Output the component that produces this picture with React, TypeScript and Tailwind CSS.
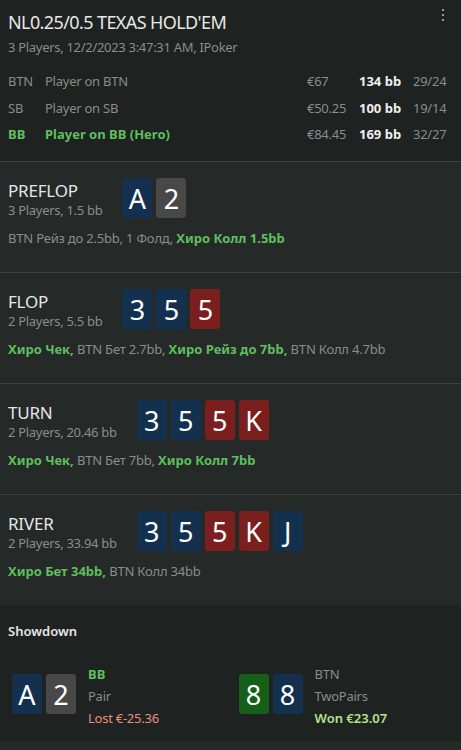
import React from "react";

type CardColor = "blue" | "gray" | "red" | "green";

const cardBg: Record<CardColor, string> = {
  blue: "bg-[#13314f]",
  gray: "bg-[#484848]",
  red: "bg-[#7b1e1e]",
  green: "bg-[#155f18]",
};

function Card({ v, c }: { v: string; c: CardColor }) {
  return (
    <div
      className={`${cardBg[c]} w-[30px] h-[40px] rounded-[3px] flex items-center justify-center text-[27px] leading-none text-white`}
    >
      {v}
    </div>
  );
}

type Seg = { t: string; hero?: boolean };

function Phase({
  name,
  sub,
  cards,
  actions,
}: {
  name: string;
  sub: string;
  cards: [string, CardColor][];
  actions: Seg[];
}) {
  return (
    <div className="border-t border-[#3b3f3e] bg-[#252928] h-[111px] px-2 pt-[18px]">
      <div className="flex items-start">
        <div className="flex flex-col">
          <div className="text-[17px] leading-[22px] text-[#e6e6e6] tracking-[-0.2px]">{name}</div>
          <div className="text-[13px] leading-[17px] text-[#8c8c8c] tracking-[-0.3px]">{sub}</div>
        </div>
        <div className="flex gap-1 ml-5 -mt-[2px]">
          {cards.map(([v, c], i) => (
            <Card key={i} v={v} c={c} />
          ))}
        </div>
      </div>
      <div className="mt-[11px] text-[13px] leading-[17px] text-[#8c8c8c]">
        {actions.map((s, i) => (
          <span
            key={i}
            className={s.hero ? "font-bold text-[#5fbf5f]" : "tracking-[-0.2px]"}
          >
            {s.t}
          </span>
        ))}
      </div>
    </div>
  );
}

export default function App() {
  return (
    <div
      className="w-[461px] h-[750px] bg-[#252928] overflow-hidden"
      style={{ fontFamily: '"Segoe UI", "Noto Sans", "Open Sans", sans-serif' }}
    >
      <div className="bg-[#1e2220] pt-[10px] pb-[13.5px] relative">
        <div className="absolute right-[17px] top-[9px] flex flex-col gap-[3px]">
          <div className="w-[2px] h-[2px] bg-[#9a9a9a]" />
          <div className="w-[2px] h-[2px] bg-[#9a9a9a]" />
          <div className="w-[2px] h-[2px] bg-[#9a9a9a]" />
        </div>
        <div className="px-2 text-[18px] leading-[24px] text-[#e8e8e8] tracking-[-0.6px]">
          NL0.25/0.5 TEXAS HOLD'EM
        </div>
        <div className="px-2 mt-[5px] text-[13px] leading-[17px] text-[#8c8c8c] tracking-[-0.3px]">
          3 Players, 12/2/2023 3:47:31 AM, IPoker
        </div>
        <div className="mt-[12px] pl-2 pr-[14px] grid grid-cols-[37px_1fr_52px_54px_34px] text-[13px] leading-[26.5px] tracking-[-0.25px]">
          <div className="text-[#8c8c8c]">BTN</div>
          <div className="text-[#8c8c8c]">Player on BTN</div>
          <div className="text-[#8c8c8c]">€67</div>
          <div className="font-bold text-[#eeeeee] tracking-normal">134 bb</div>
          <div className="text-[#8c8c8c]">29/24</div>

          <div className="text-[#8c8c8c]">SB</div>
          <div className="text-[#8c8c8c]">Player on SB</div>
          <div className="text-[#8c8c8c]">€50.25</div>
          <div className="font-bold text-[#eeeeee] tracking-normal">100 bb</div>
          <div className="text-[#8c8c8c]">19/14</div>

          <div className="font-bold text-[#5fbf5f] tracking-normal">BB</div>
          <div className="font-bold text-[#5fbf5f] tracking-normal">Player on BB (Hero)</div>
          <div className="text-[#8c8c8c]">€84.45</div>
          <div className="font-bold text-[#eeeeee] tracking-normal">169 bb</div>
          <div className="text-[#8c8c8c]">32/27</div>
        </div>
      </div>

      <Phase
        name="PREFLOP"
        sub="3 Players, 1.5 bb"
        cards={[
          ["A", "blue"],
          ["2", "gray"],
        ]}
        actions={[{ t: "BTN Рейз до 2.5bb, 1 Фолд, " }, { t: "Хиро Колл 1.5bb", hero: true }]}
      />
      <Phase
        name="FLOP"
        sub="2 Players, 5.5 bb"
        cards={[
          ["3", "blue"],
          ["5", "blue"],
          ["5", "red"],
        ]}
        actions={[
          { t: "Хиро Чек,", hero: true },
          { t: " BTN Бет 2.7bb, " },
          { t: "Хиро Рейз до 7bb,", hero: true },
          { t: " BTN Колл 4.7bb" },
        ]}
      />
      <Phase
        name="TURN"
        sub="2 Players, 20.46 bb"
        cards={[
          ["3", "blue"],
          ["5", "blue"],
          ["5", "red"],
          ["K", "red"],
        ]}
        actions={[
          { t: "Хиро Чек,", hero: true },
          { t: " BTN Бет 7bb, " },
          { t: "Хиро Колл 7bb", hero: true },
        ]}
      />
      <Phase
        name="RIVER"
        sub="2 Players, 33.94 bb"
        cards={[
          ["3", "blue"],
          ["5", "blue"],
          ["5", "red"],
          ["K", "red"],
          ["J", "blue"],
        ]}
        actions={[{ t: "Хиро Бет 34bb,", hero: true }, { t: " BTN Колл 34bb" }]}
      />

      <div className="bg-[#1e2220] h-[137px] px-2 pt-[18px]">
        <div className="text-[13px] leading-[17px] font-semibold text-[#e6e6e6]">Showdown</div>
        <div className="mt-[23px] grid grid-cols-2">
          <div className="flex items-start pl-1">
            <div className="flex gap-1 mt-[11px]">
              <Card v="A" c="blue" />
              <Card v="2" c="gray" />
            </div>
            <div className="ml-3 flex flex-col text-[13px] leading-[22px]">
              <div className="font-bold text-[#5fbf5f]">BB</div>
              <div className="text-[#8c8c8c] tracking-[-0.25px]">Pair</div>
              <div className="text-[#e98e7e] tracking-[-0.25px]">Lost €-25.36</div>
            </div>
          </div>
          <div className="flex items-start pl-[8px]">
            <div className="flex gap-1 mt-[11px]">
              <Card v="8" c="green" />
              <Card v="8" c="blue" />
            </div>
            <div className="ml-3 flex flex-col text-[13px] leading-[22px]">
              <div className="text-[#8c8c8c] tracking-[-0.25px]">BTN</div>
              <div className="text-[#8c8c8c] tracking-[-0.25px]">TwoPairs</div>
              <div className="font-semibold text-[#b3e58c]">Won €23.07</div>
            </div>
          </div>
        </div>
      </div>
    </div>
  );
}
